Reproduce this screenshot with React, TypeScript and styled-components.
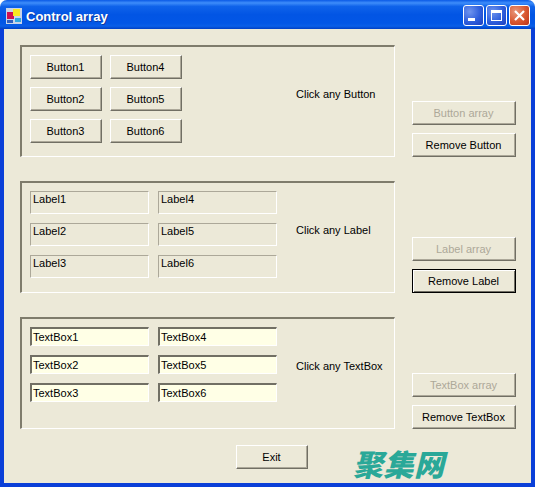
import styled, {createGlobalStyle} from 'styled-components';

const GlobalStyle = createGlobalStyle`
	html, body {
		margin: 0;
		padding: 0;
		background: #ffffff;
	}
	* {
		box-sizing: border-box;
	}
`;

const Win = styled.div`
	width: 535px;
	height: 487px;
	display: flex;
	flex-direction: column;
	position: relative;
	overflow: hidden;
	border-radius: 7px 7px 0 0;
	font-family: "Liberation Sans", Arial, sans-serif;
	font-size: 11px;
	color: #000000;
	background: #ece9d8;
`;

const TitleBar = styled.div`
	height: 29px;
	flex: none;
	display: flex;
	align-items: center;
	padding: 2px 5px 0 6px;
	background: linear-gradient(180deg, #0a5ae6 0%, #3e8dfa 10%, #0f63ea 22%, #0255e4 50%, #0256e6 80%, #0a5fe8 90%, #003fc4 100%);
`;

const AppIcon = styled.svg`
	width: 16px;
	height: 16px;
	flex: none;
	margin-right: 4px;
`;

const Title = styled.div`
	flex: 1;
	color: #ffffff;
	font-size: 13px;
	font-weight: bold;
	padding-top: 1px;
	text-shadow: 1px 1px 0 #0f3aa0;
`;

const CaptionButton = styled.div<{$close?: boolean}>`
	width: 21px;
	height: 21px;
	margin-left: 2px;
	display: flex;
	align-items: center;
	justify-content: center;
	border: 1px solid #ffffff;
	border-radius: 3px;
	background: ${p => p.$close
		? 'radial-gradient(circle at 30% 30%, #e8987c 0%, #d9572f 55%, #b9341a 100%)'
		: 'radial-gradient(circle at 30% 30%, #6f94ee 0%, #2f5fdc 55%, #1c3fc0 100%)'};
`;

const CaptionIcon = styled.svg`
	width: 15px;
	height: 15px;
`;

const Body = styled.div`
	flex: 1;
	display: flex;
	flex-direction: column;
	gap: 24px;
	padding: 16px 15px 0 16px;
	border-left: 4px solid #0a3fd8;
	border-right: 4px solid #0a3fd8;
	border-bottom: 4px solid #0a3fd8;
`;

const Row = styled.div`
	display: flex;
	gap: 17px;
	height: 112px;
	flex: none;
`;

const Panel = styled.div`
	width: 375px;
	display: grid;
	grid-template-columns: 247px auto;
	column-gap: 19px;
	padding: 8px;
	border-top: 2px solid #7f7c6c;
	border-left: 2px solid #7f7c6c;
	border-right: 1px solid #ffffff;
	border-bottom: 1px solid #ffffff;
`;

const ButtonGrid = styled.div`
	display: grid;
	grid-template-columns: 72px 72px;
	grid-template-rows: repeat(3, 24px);
	grid-auto-flow: column;
	gap: 8px;
`;

const LabelGrid = styled.div`
	display: grid;
	grid-template-columns: 119px 119px;
	grid-template-rows: repeat(3, 23px);
	grid-auto-flow: column;
	gap: 9px;
`;

const BoxGrid = styled.div`
	display: grid;
	grid-template-columns: 119px 119px;
	grid-template-rows: repeat(3, 19px);
	grid-auto-flow: column;
	gap: 9px;
`;

const Hint = styled.div`
	padding-top: 33px;
	white-space: nowrap;
`;

const Btn = styled.button<{$default?: boolean}>`
	display: block;
	width: 100%;
	height: 24px;
	padding: 0 1px 0 0;
	margin: 0;
	font: inherit;
	text-align: center;
	background: #ece9d8;
	color: #000000;
	border-style: solid;
	border-color: #ffffff #716f64 #716f64 #ffffff;
	border-width: 1px;
	box-shadow: inset -1px -1px 0 #aca899;

	${p => p.$default && `
		border-color: #000000;
		box-shadow: inset 1px 1px 0 #ffffff, inset -1px -1px 0 #716f64;
	`}

	&:disabled {
		color: #aca899;
	}
`;

const Label = styled.div`
	padding: 0 0 0 2px;
	line-height: 14px;
	border-top: 1px solid #aca899;
	border-left: 1px solid #aca899;
	border-right: 1px solid #ffffff;
	border-bottom: 1px solid #ffffff;
`;

const TextBox = styled.div`
	padding-left: 1px;
	line-height: 17px;
	background: #ffffe6;
	border-top: 2px solid #716f64;
	border-left: 2px solid #716f64;
	border-right: 1px solid #ffffff;
	border-bottom: 1px solid #ffffff;
`;

const Side = styled.div`
	width: 104px;
	display: flex;
	flex-direction: column;
	justify-content: flex-end;
	gap: 8px;
`;

const Footer = styled.div`
	display: flex;
	margin-top: -8px;
	padding-left: 216px;
`;

const ExitWrap = styled.div`
	width: 72px;
`;

const Watermark = styled.div`
	position: absolute;
	left: 353px;
	top: 447px;
	font-family: "Noto Sans CJK SC", sans-serif;
	font-size: 30px;
	line-height: 32px;
	font-weight: 900;
	font-style: italic;
	letter-spacing: 0.5px;
	color: #2aa898;
`;

const buttons = ['Button1', 'Button2', 'Button3', 'Button4', 'Button5', 'Button6'];
const labels = ['Label1', 'Label2', 'Label3', 'Label4', 'Label5', 'Label6'];
const boxes = ['TextBox1', 'TextBox2', 'TextBox3', 'TextBox4', 'TextBox5', 'TextBox6'];

export default function App() {
	return (
		<Win>
			<GlobalStyle/>
			<TitleBar>
				<AppIcon viewBox="0 0 16 16">
					<rect x="0" y="0" width="16" height="16" fill="#c8d4e8"/>
					<rect x="1" y="4" width="7" height="7" fill="#d01050"/>
					<rect x="7" y="1" width="7" height="7" fill="#f8e820"/>
					<rect x="1" y="12" width="6" height="3" fill="#3060c0"/>
					<rect x="9" y="10" width="6" height="4" fill="#30a8e0"/>
				</AppIcon>
				<Title>Control array</Title>
				<CaptionButton>
					<CaptionIcon viewBox="0 0 15 15">
						<rect x="2" y="10" width="7" height="3" fill="#ffffff"/>
					</CaptionIcon>
				</CaptionButton>
				<CaptionButton>
					<CaptionIcon viewBox="0 0 15 15">
						<rect x="2.5" y="2.5" width="10" height="10" fill="none" stroke="#ffffff"/>
						<rect x="2" y="2" width="11" height="3" fill="#ffffff"/>
					</CaptionIcon>
				</CaptionButton>
				<CaptionButton $close>
					<CaptionIcon viewBox="0 0 15 15">
						<path d="M3 3 L12 12 M12 3 L3 12" stroke="#ffffff" strokeWidth="2.2" fill="none"/>
					</CaptionIcon>
				</CaptionButton>
			</TitleBar>
			<Body>
				<Row>
					<Panel>
						<ButtonGrid>
							{buttons.map(b => <Btn key={b}>{b}</Btn>)}
						</ButtonGrid>
						<Hint>Click any Button</Hint>
					</Panel>
					<Side>
						<Btn disabled>Button array</Btn>
						<Btn>Remove Button</Btn>
					</Side>
				</Row>
				<Row>
					<Panel>
						<LabelGrid>
							{labels.map(l => <Label key={l}>{l}</Label>)}
						</LabelGrid>
						<Hint>Click any Label</Hint>
					</Panel>
					<Side>
						<Btn disabled>Label array</Btn>
						<Btn $default>Remove Label</Btn>
					</Side>
				</Row>
				<Row>
					<Panel>
						<BoxGrid>
							{boxes.map(t => <TextBox key={t}>{t}</TextBox>)}
						</BoxGrid>
						<Hint>Click any TextBox</Hint>
					</Panel>
					<Side>
						<Btn disabled>TextBox array</Btn>
						<Btn>Remove TextBox</Btn>
					</Side>
				</Row>
				<Footer>
					<ExitWrap>
						<Btn>Exit</Btn>
					</ExitWrap>
				</Footer>
			</Body>
			<Watermark>聚集网</Watermark>
		</Win>
	);
}
